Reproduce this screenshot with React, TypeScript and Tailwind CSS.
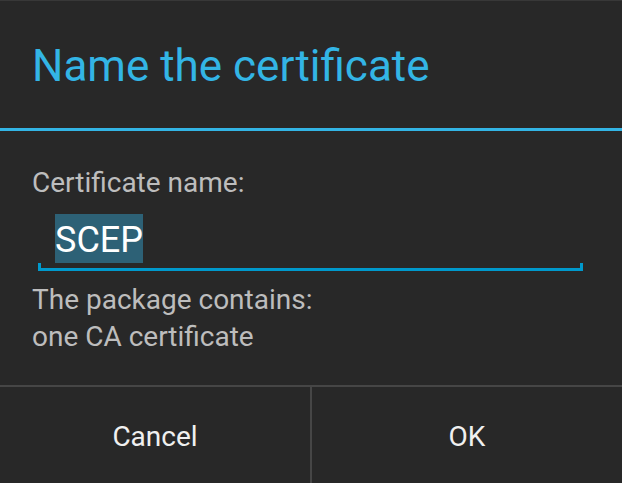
import React from 'react';

export default function App() {
  return (
    <div
      className="w-[622px] h-[483px] bg-[#282828] flex flex-col overflow-hidden border-t border-[#383838]"
      style={{ fontFamily: 'Roboto, "Noto Sans", sans-serif' }}
    >
      {/* Title */}
      <div className="pt-[39px] pb-[36px] pl-[32px]">
        <h1 className="text-[44px] leading-[52px] text-[#33b5e5] font-normal">Name the certificate</h1>
      </div>
      <div className="h-[3px] bg-[#33b5e5]" />

      {/* Body */}
      <div className="pt-[33px] pb-[30px] px-[32px]">
        <p className="text-[28px] leading-[37px] text-[#bdbdbd]">Certificate name:</p>
        <div className="mt-[13px] ml-[6px] mr-[7px]">
          <div className="pl-[17px]">
            <span className="inline-block h-[49px] pt-[4px] leading-[45px] text-[36px] text-white bg-[#2d6176]">
              SCEP
            </span>
          </div>
          <div className="h-[8px] border-x-[3px] border-b-[3px] border-[#0099cc]" />
        </div>
        <div className="mt-[10px] text-[28px] leading-[37px] text-[#bdbdbd]">
          <p>The package contains:</p>
          <p>one CA certificate</p>
        </div>
      </div>

      {/* Buttons */}
      <div className="flex flex-1 border-t-2 border-[#464646]">
        <button className="w-[312px] pt-1 text-[28px] text-[#f0f0f0] border-r-2 border-[#464646]">
          Cancel
        </button>
        <button className="flex-1 pt-1 text-[28px] text-[#f0f0f0]">OK</button>
      </div>
    </div>
  );
}
